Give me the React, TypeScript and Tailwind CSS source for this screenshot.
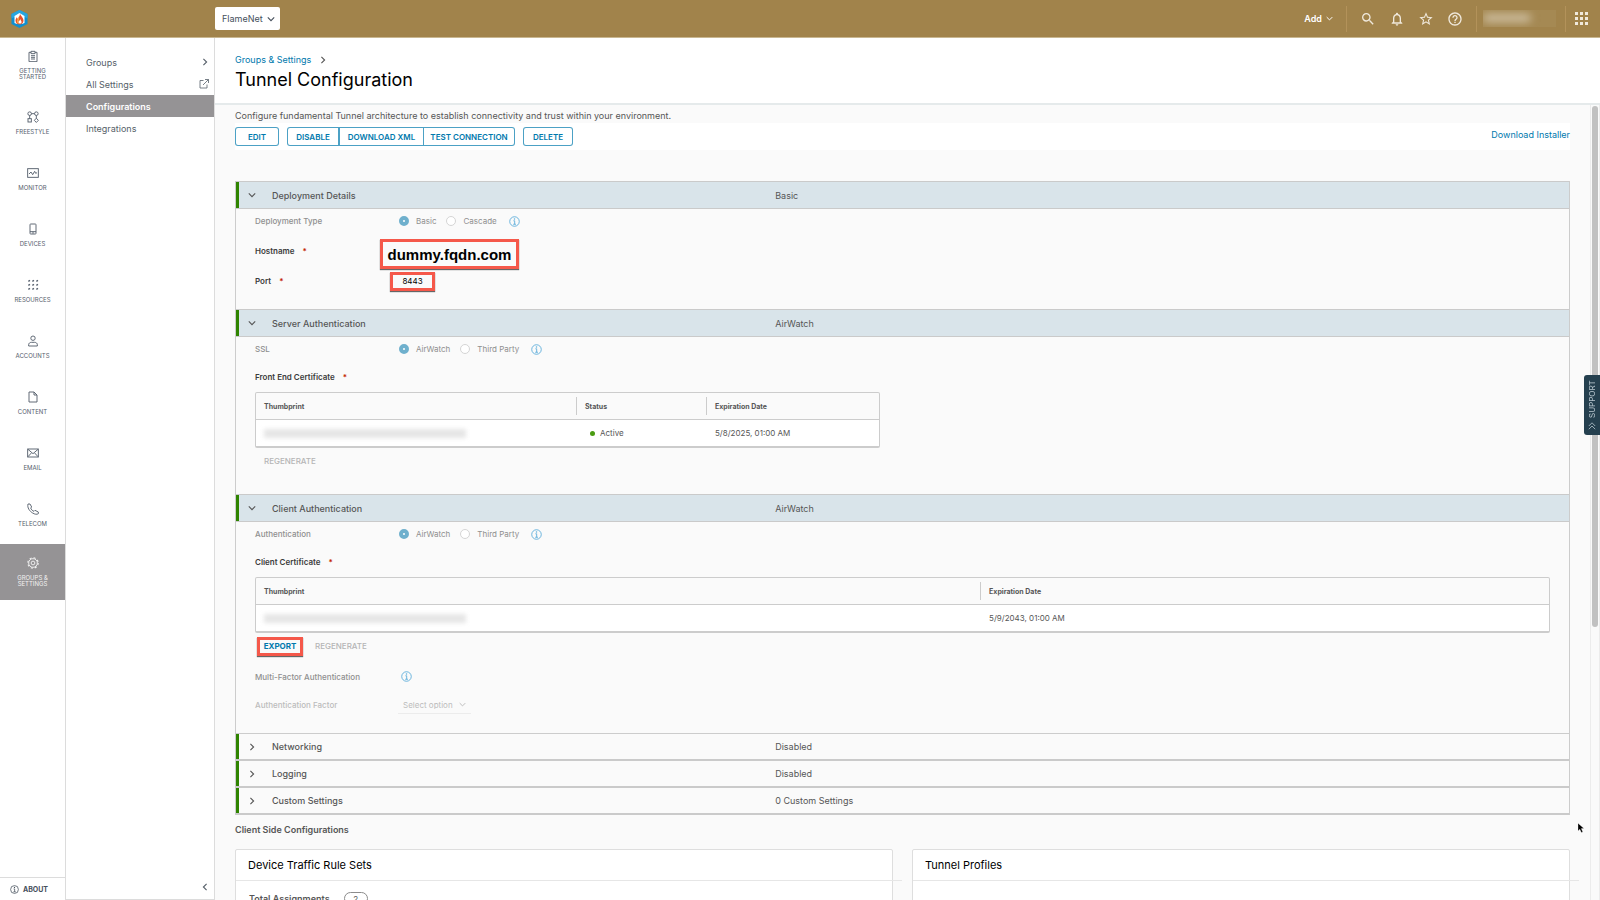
import React from 'react';
import { MdHelpOutline, MdNotificationsNone, MdSearch, MdStarBorder } from 'react-icons/md';

type IconProps = { className?: string };

function Chevron({ dir, className = '' }: { dir: 'down' | 'right' | 'left'; className?: string }) {
  const d = { down: 'M1 3l4 4 4-4', right: 'M3 1l4 4-4 4', left: 'M7 1L3 5l4 4' }[dir];
  return (
    <svg viewBox="0 0 10 10" fill="none" stroke="currentColor" strokeWidth="1.4" className={`shrink-0 ${className}`}>
      <path d={d} />
    </svg>
  );
}

function InfoIcon({ className = '' }: IconProps) {
  return (
    <svg viewBox="0 0 12 12" fill="none" stroke="currentColor" className={`shrink-0 ${className}`}>
      <circle cx="6" cy="6" r="5.2" />
      <path d="M4.8 5.2h1.400V9M4.600 9h3" />
      <circle cx="6" cy="3.200" r=".8" fill="currentColor" stroke="none" />
    </svg>
  );
}

function Logo() {
  return (
    <svg viewBox="0 0 34 36" className="h-[18px] w-[17px]">
      <path d="M17 0l16 8v20l-16 8-16-8V8z" fill="#0f8fd0" />
      <path d="M17 0l16 8v9L17 9 1 17V8z" fill="#27a5df" />
      <path d="M17 6l10 6v14l-5 2H12l-5-2V12z" fill="#fff" />
      <path d="M18 7c1 5 7 8 7 14 0 5-4 8-8 8s-8-3-8-8c0-3 2-5 3-7 0 2 1 3 2 4 1-4 4-6 4-11z" fill="#e8502a" />
      <path d="M16 12c0 3-4 6-4 10 0 3 1 5 4 6-3-5 1-8 0-16z" fill="#fbb040" />
      <path d="M19 18c0 3 2 4 2 6s-1 3-3 3-3-1-3-3 3-3 4-6z" fill="#fff" />
    </svg>
  );
}

const railIcons: Record<string, React.ReactNode> = {
  started: (
    <>
      <path d="M6 3.500H3v14h12v-14h-3M6 2h6v3.500H6z" />
      <path d="M6 8.500h6M6 11h6M6 13.500h6" />
    </>
  ),
  freestyle: (
    <>
      <circle cx="4" cy="4" r="2.700" />
      <circle cx="14" cy="4" r="2.700" />
      <rect x="1.500" y="11.500" width="5" height="5" />
      <path d="M14 10.800l3 3.200-3 3.200-3-3.200zM6.700 4h4.600M4 6.700v4.800M14 6.700v4.100" />
    </>
  ),
  monitor: (
    <>
      <rect x="1" y="2.500" width="16" height="13" />
      <path d="M3 10.500l3-3 2.500 4 3-5 1.500 3 2-1" />
    </>
  ),
  devices: (
    <>
      <rect x="4.500" y="1.500" width="9" height="15" rx="1" />
      <path d="M4.500 13h9M9 13v3" />
    </>
  ),
  resources: (
    <path
      strokeWidth="2"
      d="M2 3.500l2.500-1.500M8 3.500l2.500-1.500M14 3.500l2.500-1.500M2 9.500l2.500-1.500M8 9.500l2.500-1.500M14 9.500l2.500-1.500M2 15.500l2.500-1.500M8 15.500l2.500-1.500M14 15.500l2.500-1.500"
    />
  ),
  accounts: (
    <>
      <circle cx="9" cy="4.800" r="3.300" />
      <path d="M2.500 16.500v-2c0-2 1.800-3.500 4-3.500h5c2.200 0 4 1.500 4 3.500v2z" />
    </>
  ),
  content: <path d="M3 1.500h7.500L15 6v10.500H3zM10.500 1.500V6H15" />,
  email: (
    <>
      <rect x="1" y="3" width="16" height="12" />
      <path d="M1.500 3.500L9 10l7.500-6.500M1.500 14.500l5-5.500M16.500 14.500l-5-5.500" />
    </>
  ),
  telecom: (
    <path d="M1.500 1.500h3L7 6 5.500 7.500c1 2.500 2.500 4 5 5l1.500-1.500 5 2.500v2.500c-2 1.500-5.500 1-8.500-1C4 12.500 0 7 1.500 1.500z" />
  ),
  settings: (
    <>
      <circle cx="9" cy="9" r="6.500" />
      <circle cx="9" cy="9" r="7.800" strokeWidth="1.600" strokeDasharray="3.060 3.060" />
      <circle cx="9" cy="9" r="2.800" />
    </>
  ),
};

const railItems = [
  { label: 'GETTING STARTED', icon: 'started', pad: 'pt-[10px]' },
  { label: 'FREESTYLE', icon: 'freestyle', pad: 'pt-[15px]' },
  { label: 'MONITOR', icon: 'monitor', pad: 'pt-[15px]' },
  { label: 'DEVICES', icon: 'devices', pad: 'pt-[15px]' },
  { label: 'RESOURCES', icon: 'resources', pad: 'pt-[15px]' },
  { label: 'ACCOUNTS', icon: 'accounts', pad: 'pt-[15px]' },
  { label: 'CONTENT', icon: 'content', pad: 'pt-[15px]' },
  { label: 'EMAIL', icon: 'email', pad: 'pt-[15px]' },
  { label: 'TELECOM', icon: 'telecom', pad: 'pt-[15px]' },
  { label: 'GROUPS & SETTINGS', icon: 'settings', pad: 'pt-[13px]', active: true },
];

function TopBar() {
  return (
    <header className="flex h-[38px] shrink-0 items-center border-b border-[#c9b791] bg-[#a1834b] text-white">
      <div className="w-[215px] shrink-0 pl-[11px]">
        <Logo />
      </div>
      <button className="flex h-[23px] items-center gap-1 rounded-xs bg-white pr-[5px] pl-[7px] text-[9px] text-[#454f5b]">
        FlameNet
        <Chevron dir="down" className="h-2 w-2" />
      </button>
      <div className="ml-auto flex h-[26px] items-center">
        <button className="mr-[13px] flex items-center gap-1 text-[9px] font-semibold">
          Add
          <Chevron dir="down" className="h-[7px] w-[7px]" />
        </button>
        <div className="flex h-full items-center gap-[13px] border-x border-[#b3925a] px-[13px] text-[#f0e9dc]">
          <button aria-label="Search"><MdSearch size={16} /></button>
          <button aria-label="Notifications"><MdNotificationsNone size={16} /></button>
          <button aria-label="Favorites"><MdStarBorder size={16} /></button>
          <button aria-label="Help"><MdHelpOutline size={16} /></button>
        </div>
        <div className="flex h-full w-[89px] items-center border-r border-[#b3925a] pl-[6px]">
          <div className="h-[17px] w-[73px] overflow-hidden bg-[#a58953]">
            <div className="mt-1 h-2 w-[48px] rounded-full bg-[#cfc0a3] blur-[4px]" />
          </div>
        </div>
        <button aria-label="Applications" className="mr-3 ml-[9px] text-[#f0e9dc]">
          <svg viewBox="0 0 13 13" fill="currentColor" className="h-[13px] w-[13px]">
            {[0, 5, 10].map((y) => [0, 5, 10].map((x) => <rect key={`${x}-${y}`} x={x} y={y} width="3" height="3" />))}
          </svg>
        </button>
      </div>
    </header>
  );
}

function Rail() {
  return (
    <nav className="flex w-[66px] shrink-0 flex-col border-r border-[#dcdcdc] bg-white pt-[2px]">
      {railItems.map((item) => (
        <a
          key={item.label}
          href="#"
          className={`flex h-14 flex-col items-center gap-[6px] px-3 text-center text-[6px] leading-[6px] ${item.pad} ${
            item.active ? 'bg-[#959395] text-[#f2f2f2]' : 'text-[#56606d]'
          }`}
        >
          <svg viewBox="0 0 18 18" fill="none" stroke="currentColor" strokeWidth="1.400" className="h-3 w-3 shrink-0">
            {railIcons[item.icon]}
          </svg>
          {item.label}
        </a>
      ))}
      <button className="mt-auto flex h-[23px] items-center gap-1 border-t border-[#dcdcdc] pl-[10px] text-[7px] font-bold text-[#46505c]">
        <InfoIcon className="h-[9px] w-[9px]" />
        ABOUT
      </button>
    </nav>
  );
}

function SideNav() {
  const link = 'flex h-[22px] items-center justify-between pl-5 pr-[5px]';
  return (
    <nav className="flex w-[149px] shrink-0 flex-col border-r border-b border-[#dcdcdc] bg-white pt-[13px] text-[9px] text-[#565f69]">
      <a href="#" className={link}>
        Groups
        <Chevron dir="right" className="h-2 w-2" />
      </a>
      <a href="#" className={link}>
        All Settings
        <svg viewBox="0 0 20 20" fill="none" stroke="currentColor" strokeWidth="1.600" className="h-[10px] w-[10px]">
          <path d="M9 3H2v15h14v-7M12 1h7v7M19 1L8 12" />
        </svg>
      </a>
      <a href="#" className={`${link} bg-[#959395] font-semibold text-white`}>Configurations</a>
      <a href="#" className={link}>Integrations</a>
      <button aria-label="Collapse menu" className="mt-auto mr-[5px] mb-2 self-end">
        <Chevron dir="left" className="h-2 w-2" />
      </button>
    </nav>
  );
}

interface SectionProps {
  title: string;
  value: string;
  children?: React.ReactNode;
}

function Section({ title, value, children }: SectionProps) {
  const open = Boolean(children);
  return (
    <section>
      <button
        aria-expanded={open}
        className={`grid w-full grid-cols-[2fr_3fr] items-center border-[#cacaca] text-left text-[9px] text-[#565656] ${
          open ? 'h-7 border-y bg-[#d9e4ea]' : 'h-[27px] border-b-2'
        }`}
      >
        <span className="flex h-full items-center border-l-[3px] border-[#2f8400] pl-[9px] font-medium">
          <Chevron dir={open ? 'down' : 'right'} className="mr-4 h-2 w-2" />
          {title}
        </span>
        <span className="pl-[6px]">{value}</span>
      </button>
      {open && <div className="px-[19px] text-[8px] text-[#565656]">{children}</div>}
    </section>
  );
}

function RadioRow({ label, name, options }: { label: string; name: string; options: string[] }) {
  return (
    <div role="radiogroup" aria-labelledby={`${name}-label`} className="flex h-6 items-center text-[#8f8f8f]">
      <span id={`${name}-label`} className="w-[144px] font-medium">{label}</span>
      {options.map((option, i) => (
        <label key={option} className="mr-[10px] flex items-center gap-[7px]">
          <input
            type="radio"
            name={name}
            disabled
            defaultChecked={i === 0}
            className="h-[10px] w-[10px] appearance-none rounded-full border border-[#d5d5d5] bg-white checked:border-4 checked:border-[#6fb0cd]"
          />
          {option}
        </label>
      ))}
      <InfoIcon className="ml-[2px] h-[11px] w-[11px] text-[#5eaedb]" />
    </div>
  );
}

function Required() {
  return <span className="ml-2 text-[#c21d00]">*</span>;
}

const fieldLabel = 'font-semibold text-[#3c3c3c]';

interface Column {
  name: string;
  width: string;
}

function CertTable({ columns, children }: { columns: Column[]; children: React.ReactNode }) {
  return (
    <table className="w-full table-fixed border-separate border-spacing-0 rounded-xs border border-b-2 border-[#cccccc] text-left">
      <thead>
        <tr className="h-[27px] text-[7px]">
          {columns.map((col, i) => (
            <th key={col.name} className={`border-b border-[#cccccc] p-0 font-bold ${col.width}`}>
              <div className={`flex h-[18px] items-center pl-2 ${i > 0 ? 'border-l border-[#cccccc]' : ''}`}>{col.name}</div>
            </th>
          ))}
        </tr>
      </thead>
      <tbody>
        <tr className="h-[26px] bg-white">{children}</tr>
      </tbody>
    </table>
  );
}

function Redacted() {
  return (
    <td className="px-2 py-0">
      <div className="h-[9px] w-[202px] bg-[#e6e6e6] blur-[2px]" />
    </td>
  );
}

function Deployment() {
  const highlight = 'border-[3px] border-[#f5584a] bg-[#fafafa] text-center text-black shadow-[0_1px_1px_#666666]';
  return (
    <Section title="Deployment Details" value="Basic">
      <RadioRow label="Deployment Type" name="deployment" options={['Basic', 'Cascade']} />
      <div className="flex h-9 items-center">
        <label htmlFor="hostname" className={`w-[125px] ${fieldLabel}`}>
          Hostname
          <Required />
        </label>
        <input
          id="hostname"
          readOnly
          defaultValue="dummy.fqdn.com"
          className={`h-[30px] w-[139px] self-end font-['Liberation_Sans',sans-serif] text-[15px] font-bold ${highlight}`}
        />
      </div>
      <div className="flex h-6 items-center">
        <label htmlFor="port" className={`w-[135px] ${fieldLabel}`}>
          Port
          <Required />
        </label>
        <input id="port" readOnly defaultValue="8443" className={`h-[19px] w-[45px] ${highlight}`} />
      </div>
      <div className="h-4" />
    </Section>
  );
}

function ServerAuth() {
  return (
    <Section title="Server Authentication" value="AirWatch">
      <RadioRow label="SSL" name="ssl" options={['AirWatch', 'Third Party']} />
      <p className={`flex h-[31px] items-center ${fieldLabel}`}>
        Front End Certificate
        <Required />
      </p>
      <div className="max-w-[625px]">
        <CertTable
          columns={[
            { name: 'Thumbprint', width: '' },
            { name: 'Status', width: 'w-[130px]' },
            { name: 'Expiration Date', width: 'w-[173px]' },
          ]}
        >
          <Redacted />
          <td className="px-[14px] py-0">
            <span className="mr-[5px] inline-block h-[5px] w-[5px] rounded-full bg-[#4a9c12] align-middle" />
            Active
          </td>
          <td className="px-[9px] py-0">5/8/2025, 01:00 AM</td>
        </CertTable>
      </div>
      <div className="mb-5 flex h-[26px] items-center pl-[9px]">
        <button disabled className="text-[8px] font-medium text-[#b5b5b5]">REGENERATE</button>
      </div>
    </Section>
  );
}

function ClientAuth() {
  return (
    <Section title="Client Authentication" value="AirWatch">
      <RadioRow label="Authentication" name="client-auth" options={['AirWatch', 'Third Party']} />
      <p className={`flex h-[31px] items-center ${fieldLabel}`}>
        Client Certificate
        <Required />
      </p>
      <CertTable
        columns={[
          { name: 'Thumbprint', width: 'w-[56%]' },
          { name: 'Expiration Date', width: 'w-[44%]' },
        ]}
      >
        <Redacted />
        <td className="px-[9px] py-0">5/9/2043, 01:00 AM</td>
      </CertTable>
      <div className="flex h-[26px] items-center gap-3 pl-[2px] text-[8px]">
        <button className="h-[19px] w-[46px] border-[3px] border-[#f5584a] font-bold text-[#0079ad] shadow-[0_1px_1px_#666666]">
          EXPORT
        </button>
        <button disabled className="font-medium text-[#b5b5b5]">REGENERATE</button>
      </div>
      <div className="flex h-[35px] items-center font-medium text-[#8f8f8f]">
        <span className="w-[146px]">Multi-Factor Authentication</span>
        <InfoIcon className="h-[11px] w-[11px] text-[#5eaedb]" />
      </div>
      <div className="mb-[17px] flex h-[22px] items-center text-[#bcbcbc]">
        <label htmlFor="factor" className="w-[143px] font-medium">Authentication Factor</label>
        <div className="flex h-[18px] w-[73px] items-center border-b border-[#ececec]">
          <select id="factor" disabled className="w-[61px] appearance-none pl-[5px]">
            <option>Select option</option>
          </select>
          <Chevron dir="down" className="h-[7px] w-[7px]" />
        </div>
      </div>
    </Section>
  );
}

function Card({ title, children }: { title: string; children?: React.ReactNode }) {
  return (
    <article className="h-40 rounded-xs border border-[#dedede] bg-white">
      <h2 className="-mr-[10px] flex h-[31px] items-center border-b border-[#e6e6e6] pl-3 text-[11px] text-black">{title}</h2>
      {children}
    </article>
  );
}

function Actions() {
  const button = 'h-[19px] border border-[#0079ad]/70 bg-white text-[8px] font-semibold text-[#0079ad]';
  return (
    <div className="flex h-[27px] items-center bg-white">
      <button className={`${button} mr-2 w-11 rounded-[3px]`}>EDIT</button>
      <div className="mr-2 flex">
        <button className={`${button} w-[52px] rounded-l-[3px]`}>DISABLE</button>
        <button className={`${button} w-[84px] border-r-0`}>DOWNLOAD XML</button>
        <button className={`${button} w-[92px] rounded-r-[3px]`}>TEST CONNECTION</button>
      </div>
      <button className={`${button} w-[50px] rounded-[3px]`}>DELETE</button>
      <a href="#" className="ml-auto pb-[5px] text-[9px] text-[#0079ad]">Download Installer</a>
    </div>
  );
}

export default function App() {
  return (
    <div className="relative flex h-screen flex-col overflow-hidden bg-[#fafafa] font-['Inter',sans-serif] leading-none">
      <TopBar />
      <div className="flex min-h-0 flex-1">
        <Rail />
        <SideNav />
        <main className="flex min-w-0 flex-1 flex-col">
          <div className="h-[67px] shrink-0 border-b-2 border-[#e5eaeb] bg-white pt-[17px] pl-5">
            <nav className="flex items-center gap-2 text-[9px] text-[#0079ad]">
              <a href="#">Groups &amp; Settings</a>
              <Chevron dir="right" className="h-2 w-2 text-[#565656]" />
            </nav>
            <h1 className="mt-[7px] text-[18px] text-black">Tunnel Configuration</h1>
          </div>
          <div className="flex min-h-0 flex-1">
            <div className="min-w-0 flex-1 overflow-hidden px-5">
              <p className="flex h-[18px] items-center pt-[3px] text-[9px] text-[#565656]">
                Configure fundamental Tunnel architecture to establish connectivity and trust within your environment.
              </p>
              <Actions />
              <div className="mt-[31px] border-x border-[#cccccc]">
                <Deployment />
                <ServerAuth />
                <ClientAuth />
                <div className="border-t border-[#cccccc]">
                  <Section title="Networking" value="Disabled" />
                  <Section title="Logging" value="Disabled" />
                  <Section title="Custom Settings" value="0 Custom Settings" />
                </div>
              </div>
              <h3 className="flex h-[34px] items-center pb-[5px] text-[9px] font-semibold text-[#565656]">
                Client Side Configurations
              </h3>
              <div className="grid grid-cols-2 gap-[19px]">
                <Card title="Device Traffic Rule Sets">
                  <div className="flex items-center pt-[11px] pl-[13px] text-[9px] text-[#565656]">
                    <span className="font-semibold">Total Assignments</span>
                    <span className="ml-[14px] flex h-[13px] w-6 items-center justify-center rounded-full border border-[#8c8c8c] text-[8px]">
                      2
                    </span>
                  </div>
                </Card>
                <Card title="Tunnel Profiles" />
              </div>
            </div>
            <div className="w-[10px] shrink-0 border-x border-[#ececec] pt-[1px]">
              <div className="ml-[1px] h-[521px] w-[6px] rounded-full bg-[#c1c1c1]" />
            </div>
          </div>
        </main>
      </div>

      {/* Support tab */}
      <button className="absolute top-[375px] right-0 flex h-[60px] w-4 rotate-180 items-center justify-center gap-1 rounded-r-[3px] bg-[#25404f] text-[8px] text-[#b8c6ce] [writing-mode:vertical-rl]">
        <svg viewBox="0 0 10 10" fill="none" stroke="currentColor" className="h-2 w-2">
          <path d="M1 1l4 4 4-4M1 5l4 4 4-4" />
        </svg>
        SUPPORT
      </button>

      {/* Mouse pointer */}
      <svg viewBox="0 0 10 16" className="pointer-events-none absolute top-[823px] right-[16px] h-[10px] w-[6px]">
        <path d="M0 0v13l3-3 2.500 5.500 2.500-1L5.500 9H10z" fill="#000" stroke="#fff" strokeWidth=".5" />
      </svg>
    </div>
  );
}
